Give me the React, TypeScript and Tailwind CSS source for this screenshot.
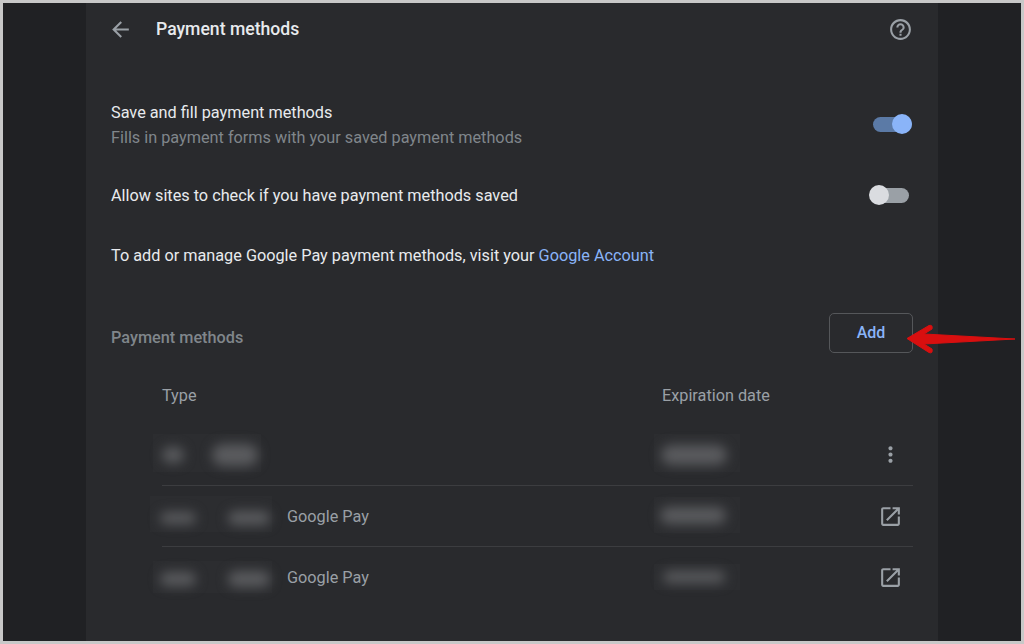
function Smudge({ className }: { className: string }) {
  return <div className={`absolute rounded-full bg-[#5a5b5e] blur-[6px] ${className}`} />;
}

// faint box the blur tool left behind
function Haze({ className }: { className: string }) {
  return <div className={`absolute bg-[#2c2d30] ${className}`} />;
}

function OpenIcon() {
  return (
    <svg className="h-[25px] w-[25px] translate-x-[1px] fill-[#9aa0a6]" viewBox="0 0 24 24">
      <path d="M19 19H5V5h7V3H5c-1.11 0-2 .9-2 2v14c0 1.1.89 2 2 2h14c1.1 0 2-.9 2-2v-7h-2v7zM14 3v2h3.59l-9.83 9.83 1.41 1.41L19 6.41V10h2V3h-7z" />
    </svg>
  );
}

function DotsIcon() {
  return (
    <svg className="h-[25px] w-[25px] translate-x-[1px] fill-[#9aa0a6]" viewBox="0 0 24 24">
      <path d="M12 8c1.1 0 2-.9 2-2s-.9-2-2-2-2 .9-2 2 .9 2 2 2zm0 2c-1.1 0-2 .9-2 2s.9 2 2 2 2-.9 2-2-.9-2-2-2zm0 6c-1.1 0-2 .9-2 2s.9 2 2 2 2-.9 2-2-.9-2-2-2z" />
    </svg>
  );
}

function Row({ type, date, icon, gpay, border }: { type: React.ReactNode; date: React.ReactNode; icon: React.ReactNode; gpay?: boolean; border?: boolean }) {
  return (
    <div className={`grid h-[61px] grid-cols-[500px_1fr_auto] items-center ${border ? "border-t border-[#3c3d40]" : ""}`}>
      <div className="flex items-center">
        <div className="relative h-[30px] w-[125px]">{type}</div>
        {gpay ? <span className="mt-[2px] text-[16.25px] text-[#9aa0a6]">Google Pay</span> : null}
      </div>
      <div className="relative h-[30px]">{date}</div>
      <div className="pr-[11px]">{icon}</div>
    </div>
  );
}

export default function App() {
  return (
    <div className="relative h-[644px] w-[1024px] overflow-hidden border-[3px] border-[#c8c8c8] bg-[#202124] font-['Roboto',sans-serif]">
      <div className="ml-[83px] h-full w-[852px] bg-[#292a2d] px-[25px]">
        <div className="flex h-[53px] items-center">
          <svg className="-ml-[3px] h-[25px] w-[25px] fill-[#9aa0a6]" viewBox="0 0 24 24">
            <path d="M20 11H7.83l5.59-5.59L12 4l-8 8 8 8 1.41-1.41L7.83 13H20v-2z" />
          </svg>
          <h1 className="ml-[23px] text-[17.6px] font-medium text-[#e8eaed]">Payment methods</h1>
          <svg className="ml-auto h-[25px] w-[25px] fill-[#9aa0a6]" viewBox="0 0 24 24">
            <path d="M11 18h2v-2h-2v2zm1-16C6.48 2 2 6.48 2 12s4.48 10 10 10 10-4.48 10-10S17.52 2 12 2zm0 18c-4.41 0-8-3.59-8-8s3.59-8 8-8 8 3.59 8 8-3.59 8-8 8zm0-14c-2.21 0-4 1.79-4 4h2c0-1.1.9-2 2-2s2 .9 2 2c0 2-3 1.75-3 5h2c0-2.25 3-2.5 3-5 0-2.21-1.79-4-4-4z" />
          </svg>
        </div>

        <div className="mt-[46px] flex items-start justify-between">
          <div>
            <div className="text-[16.25px] leading-[22px] text-[#e8eaed]">Save and fill payment methods</div>
            <div className="text-[16.25px] leading-[28px] text-[#80868b]">Fills in payment forms with your saved payment methods</div>
          </div>
          <div className="relative mt-[15px] mr-[1px] h-[15px] w-[39px] rounded-full bg-[#5b7aa6]">
            <div className="absolute right-0 -top-[3px] h-[20px] w-[20px] rounded-full bg-[#8ab4f8]" />
          </div>
        </div>

        <div className="mt-[32px] flex items-start justify-between">
          <div className="text-[16.25px] leading-[24px] text-[#e8eaed]">Allow sites to check if you have payment methods saved</div>
          <div className="relative mt-[4px] mr-[4px] h-[15px] w-[39px] rounded-full bg-[#9aa0a6]">
            <div className="absolute -left-[1px] -top-[3px] h-[20px] w-[20px] rounded-full bg-[#dadce0]" />
          </div>
        </div>

        <div className="mt-[36px] text-[16.25px] leading-[24px] text-[#e8eaed]">
          To add or manage Google Pay payment methods, visit your <span className="text-[#8ab4f8]">Google Account</span>
        </div>

        <div className="mt-[45px] flex items-start justify-between">
          <div className="mt-[13px] text-[16.25px] leading-[24px] font-medium text-[#80868b]">Payment methods</div>
          <button className="flex h-[40px] w-[84px] items-center justify-center rounded-[5px] border border-[#55575a] text-[16px] font-medium text-[#8ab4f8]">Add</button>
        </div>

        <div className="mt-[19px] ml-[51px]">
          <div className="mb-[4px] grid h-[48px] grid-cols-[500px_1fr] items-center text-[16.25px] text-[#9aa0a6]">
            <div>Type</div>
            <div>Expiration date</div>
          </div>
          <Row
            type={<><Haze className="-left-[9px] -top-[6px] h-[38px] w-[108px]" /><Smudge className="left-[0px] top-[7px] h-[16px] w-[22px]" /><Smudge className="left-[50px] top-[4px] h-[22px] w-[46px]" /></>}
            date={<><Haze className="-left-[8px] -top-[6px] h-[38px] w-[86px]" /><Smudge className="left-[-1px] top-[5px] h-[20px] w-[66px]" /></>}
            icon={<DotsIcon />}
          />
          <Row
            border
            gpay
            type={<><Haze className="-left-[12px] -top-[5px] h-[36px] w-[122px]" /><Smudge className="left-[-2px] top-[11px] h-[12px] w-[36px]" /><Smudge className="left-[66px] top-[10px] h-[14px] w-[42px]" /></>}
            date={<><Haze className="-left-[8px] -top-[4px] h-[36px] w-[86px]" /><Smudge className="left-[-2px] top-[6px] h-[17px] w-[66px]" /></>}
            icon={<OpenIcon />}
          />
          <Row
            border
            gpay
            type={<><Haze className="-left-[9px] -top-[1px] h-[32px] w-[119px]" /><Smudge className="left-[-2px] top-[10px] h-[14px] w-[36px]" /><Smudge className="left-[66px] top-[9px] h-[16px] w-[42px]" /></>}
            date={<><Haze className="-left-[8px] top-[2px] h-[26px] w-[86px]" /><Smudge className="left-[1px] top-[9px] h-[12px] w-[62px]" /></>}
            icon={<OpenIcon />}
          />
        </div>
      </div>

      {/* red annotation arrow */}
      <svg className="absolute left-[902px] top-[319px]" width="112" height="34" viewBox="0 0 112 34">
        <path d="M2 16.5 L24 3.5 Q28 2.5 27 7 L19 12 L110 17 L19 22 L27 27 Q28 32 24 30.5 Z" fill="#d80f0f" stroke="#d80f0f" strokeLinejoin="round" />
      </svg>
    </div>
  );
}
